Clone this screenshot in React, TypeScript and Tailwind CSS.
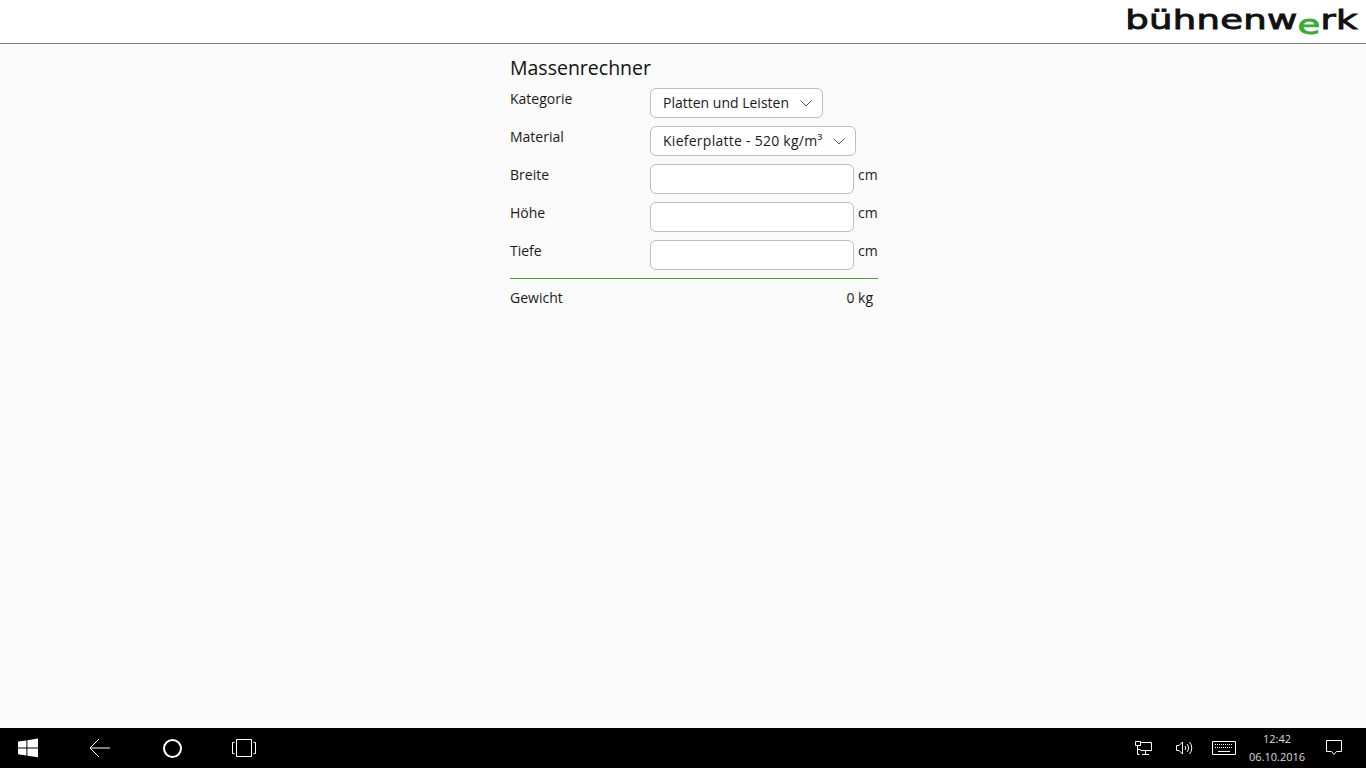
const font = { fontFamily: '"Open Sans", "Noto Sans", sans-serif' };

function Label({ children }: { children: string }) {
  return <div className="w-[140px] shrink-0 pt-[1px] text-[14px] leading-[20px] text-[#1a1a1a]">{children}</div>;
}

function SelectRow({ label, value, width, spacing }: { label: string; value: string; width: string; spacing: string }) {
  return (
    <div className="flex h-[38px] items-start">
      <Label>{label}</Label>
      <div className={`flex h-[30px] ${width} items-center justify-between rounded-[6px] border border-[#bdbdbd] bg-white pl-[12px] pr-[10px]`}>
        <span className={`text-[14px] leading-[20px] whitespace-nowrap text-[#1a1a1a] ${spacing}`}>{value}</span>
        <svg width="12" height="7" viewBox="0 0 12 7" fill="none" stroke="#555" strokeWidth="1">
          <path d="M.5.5 6 6 11.500.5" />
        </svg>
      </div>
    </div>
  );
}

function InputRow({ label }: { label: string }) {
  return (
    <div className="flex h-[38px] items-start">
      <Label>{label}</Label>
      <input className="h-[30px] w-[204px] rounded-[6px] border border-[#bdbdbd] bg-white outline-none" />
      <span className="ml-[4px] pt-[1px] text-[14px] leading-[20px] text-[#1a1a1a]">cm</span>
    </div>
  );
}

function Logo() {
  return (
    <div
      className="mt-[3px] flex origin-right scale-x-[1.37] items-baseline text-[27px] leading-[34px] tracking-[0.2px] text-[#111] [-webkit-text-stroke:0.9px_#111]"
      style={{ fontFamily: '"DejaVu Sans", sans-serif' }}
    >
      <span>bühnenw</span>
      <span className="relative top-[5px] text-[#3aaa35] [-webkit-text-stroke:0.9px_#3aaa35]">e</span>
      <span>rk</span>
    </div>
  );
}

function Taskbar() {
  return (
    <div className="flex h-[40px] shrink-0 items-center bg-black text-white">
      <div className="flex w-[56px] justify-center">
        <svg width="22" height="20" viewBox="0 0 22 20" fill="#fff">
          <path d="M1 3.6 9.4 2.4V9.4H1zM10.4 2.3 21 .6V9.4H10.4zM1 10.4H9.4V17.5L1 16.3zM10.4 10.4H21V19.3L10.4 17.7z" />
        </svg>
      </div>
      <div className="ml-[32px] flex w-[24px] justify-center">
        <svg width="22" height="20" viewBox="0 0 22 20" fill="none" stroke="#fff" strokeWidth="1">
          <path d="M21 10H1.5M10 1 1 10l9 9" />
        </svg>
      </div>
      <div className="ml-[48px] flex w-[24px] justify-center">
        <div className="h-[19px] w-[19px] rounded-full border-[2.5px] border-white" />
      </div>
      <div className="ml-[48px] flex w-[24px] justify-center">
        <svg width="24" height="18" viewBox="0 0 24 18" fill="none" stroke="#fff" strokeWidth="1">
          <path d="M4.5.5h15v17h-15zM2.5 3.5H.5v11h2M21.5 3.5h2v11h-2" />
        </svg>
      </div>
      <div className="ml-auto flex items-center">
        <svg width="17" height="14" viewBox="0 0 17 14" fill="none" stroke="#fff" strokeWidth="1" className="mr-[24px]">
          <path d="M5.500 1.500h11v8h-11M.5.5h5v4h-5zM2.500 4.500v9M2.500 8.500h3M2.500 13.500h2M7 13.500h7M10.500 9.500v4" />
        </svg>
        <svg width="17" height="14" viewBox="0 0 17 14" fill="none" stroke="#fff" strokeWidth="1" className="mr-[19px]">
          <path d="M.5 4.500v5h2.500L6.500 13V1L3 4.500zM9 5a3 3 0 0 1 0 4M11 3a6 6 0 0 1 0 8M13.500 1a9 9 0 0 1 0 12" />
        </svg>
        <svg width="24" height="14" viewBox="0 0 24 14" fill="none" stroke="#fff" strokeWidth="1" className="mr-[12px]">
          <path d="M.5.5h23v13H.5z" />
          <path d="M3 3.500h18M3 6.500h18" strokeDasharray="1 1" />
          <path d="M6 10.500h12" />
        </svg>
        <div className="w-[58px] text-center text-[11px] leading-[18px] text-[#dcdcdc]">
          <div>12:42</div>
          <div>06.10.2016</div>
        </div>
        <svg width="18" height="16" viewBox="0 0 18 16" fill="none" stroke="#fff" strokeWidth="1" className="ml-[20px] mr-[22px]">
          <path d="M.5.500h15v11h-5L8 14.500 5.500 11.500h-5z" />
        </svg>
      </div>
    </div>
  );
}

export default function App() {
  return (
    <div className="flex h-[768px] flex-col overflow-hidden bg-[#fafafa]" style={font}>
      <header className="flex h-[44px] shrink-0 items-start justify-end border-b border-[#7a7a7a] bg-white pr-[8px]">
        <Logo />
      </header>
      <main className="flex-1 pl-[510px]">
        <div className="w-[368px]">
          <h1 className="mt-[10px] text-[19.5px] leading-[28px] text-[#111]">Massenrechner</h1>
          <div className="mt-[6px]">
            <SelectRow label="Kategorie" value="Platten und Leisten" width="w-[173px]" spacing="tracking-normal" />
            <SelectRow label="Material" value="Kieferplatte - 520 kg/m³" width="w-[206px]" spacing="tracking-[0.26px]" />
            <InputRow label="Breite" />
            <InputRow label="Höhe" />
            <InputRow label="Tiefe" />
          </div>
          <div className="h-px bg-[#3aaa35]" />
          <div className="mt-[9px] flex justify-between pr-[5px] text-[14px] leading-[20px] text-[#1a1a1a]">
            <span>Gewicht</span>
            <span>0 kg</span>
          </div>
        </div>
      </main>
      <Taskbar />
    </div>
  );
}
